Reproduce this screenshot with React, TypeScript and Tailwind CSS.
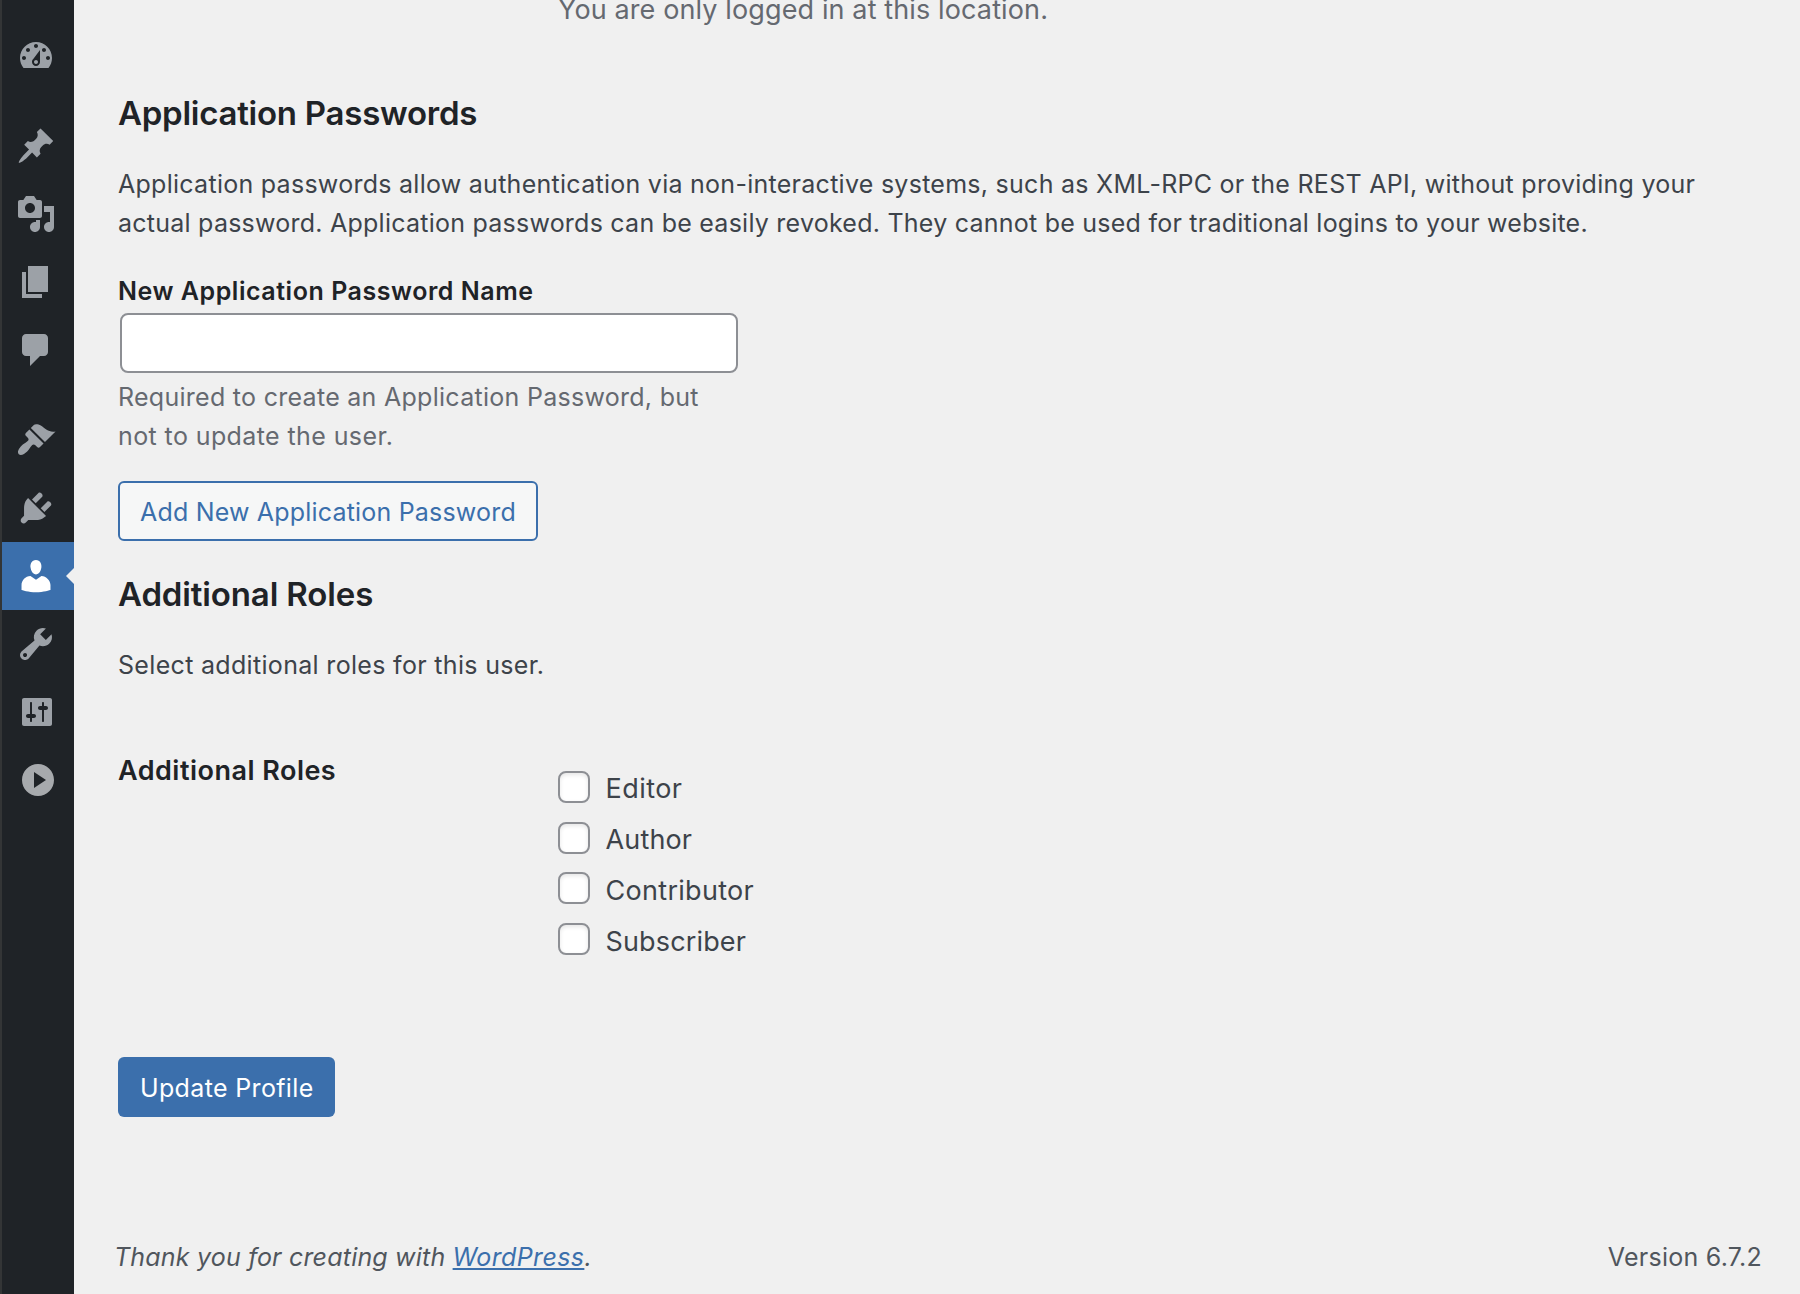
import React from 'react';

type MenuIcon = { name: string; d: string; current?: boolean };

const menuGroups: MenuIcon[][] = [
  [
    {
      name: 'Dashboard',
      d: 'M3.76 16h12.48c1.1-1.37 1.76-3.11 1.76-5 0-4.42-3.58-8-8-8s-8 3.58-8 8c0 1.89.66 3.63 1.76 5zM10 4c.55 0 1 .45 1 1s-.45 1-1 1-1-.45-1-1 .45-1 1-1zM6 6c.55 0 1 .45 1 1s-.45 1-1 1-1-.45-1-1 .45-1 1-1zm8 0c.55 0 1 .45 1 1s-.45 1-1 1-1-.45-1-1 .45-1 1-1zm-5.37 5.55L12 7v6c0 1.1-.9 2-2 2s-2-.9-2-2c0-.57.24-1.08.63-1.45zM4 10c.55 0 1 .45 1 1s-.45 1-1 1-1-.45-1-1 .45-1 1-1zm12 0c.55 0 1 .45 1 1s-.45 1-1 1-1-.45-1-1 .45-1 1-1zm-5 3c0-.55-.45-1-1-1s-1 .45-1 1 .45 1 1 1 1-.45 1-1z',
    },
  ],
  [
    {
      name: 'Posts',
      d: 'M10.44 3.02l1.82-1.82 6.36 6.35-1.83 1.82c-1.05-.68-2.48-.57-3.41.36l-.75.75c-.92.93-1.04 2.35-.35 3.41l-1.83 1.82-2.41-2.41-2.8 2.79c-.42.42-3.38 2.71-3.8 2.29s1.86-3.39 2.28-3.81l2.79-2.79L4.1 9.36l1.83-1.82c1.05.69 2.48.57 3.4-.36l.75-.75c.93-.92 1.05-2.35.36-3.41z',
    },
    {
      name: 'Media',
      d: 'M13 11V4c0-.55-.45-1-1-1h-1.67L9 1H5L3.67 3H2c-.55 0-1 .45-1 1v7c0 .55.45 1 1 1h10c.55 0 1-.45 1-1zM7 4.5c1.38 0 2.5 1.12 2.5 2.5S8.38 9.5 7 9.5 4.5 8.38 4.5 7 5.62 4.5 7 4.5zM14 6h5v10.5c0 1.38-1.12 2.5-2.5 2.5S14 17.88 14 16.5s1.12-2.5 2.5-2.5c.17 0 .34.02.5.05V9h-3V6zm-4 8.05V13h2v3.5c0 1.38-1.12 2.5-2.5 2.5S7 17.88 7 16.5 8.12 14 9.5 14c.17 0 .34.02.5.05z',
    },
    { name: 'Pages', d: 'M6 15V2h10v13H6zm-1 1h8v2H3V5h2v11z' },
    {
      name: 'Comments',
      d: 'M5 2h9q.82 0 1.41.59T16 4v7q0 .82-.59 1.41T14 13h-2l-5 5v-5H5q-.82 0-1.41-.59T3 11V4q0-.82.59-1.41T5 2z',
    },
  ],
  [
    {
      name: 'Appearance',
      d: 'M14.48 11.06L7.41 3.99l1.5-1.5c.5-.56 2.3-.47 3.51.32 1.21.8 1.43 1.28 2.91 2.1 1.18.64 2.45 1.26 4.45.85zm-.71.71L6.7 4.7 4.93 6.47c-.39.39-.39 1.02 0 1.41l1.06 1.06c.39.39.39 1.03 0 1.42-.6.6-1.43 1.11-2.21 1.69-.35.26-.7.53-1.01.84C1.43 14.23.4 16.08 1.4 17.07c.99 1 2.84-.03 4.18-1.36.31-.31.58-.66.85-1.02.57-.78 1.08-1.61 1.69-2.21.39-.39 1.02-.39 1.41 0l1.06 1.06c.39.39 1.02.39 1.41 0z',
    },
    {
      name: 'Plugins',
      d: 'M13.11 4.36L9.87 7.6 8 5.73l3.24-3.24c.35-.34 1.05-.2 1.56.32.52.51.66 1.21.31 1.55zm-8 1.77l.91-1.12 9.01 9.01-1.19.84c-.71.71-2.63 1.16-3.82 1.16H6.14L4.9 17.26c-.59.59-1.54.59-2.12 0-.59-.58-.59-1.53 0-2.12l1.24-1.24v-3.88c0-1.13.4-3.19 1.09-3.89zm7.26 3.97l3.24-3.24c.34-.35 1.04-.21 1.55.31.52.51.66 1.21.31 1.55l-3.24 3.25z',
    },
    {
      name: 'Users',
      current: true,
      d: 'M10 9.25c-2.27 0-2.73-3.44-2.73-3.44C7 4.02 7.82 2 9.97 2c2.16 0 2.98 2.02 2.71 3.81 0 0-.41 3.44-2.68 3.44zm0 2.57L12.72 10c2.39 0 4.52 2.33 4.52 4.53v2.49s-3.65 1.13-7.24 1.13c-3.65 0-7.24-1.13-7.24-1.13v-2.49c0-2.25 1.94-4.48 4.47-4.48z',
    },
    {
      name: 'Tools',
      d: 'M16.68 9.77c-1.34 1.34-3.3 1.67-4.95.99l-5.41 6.52c-.99.99-2.59.99-3.58 0s-.99-2.59 0-3.57l6.52-5.42c-.68-1.65-.35-3.61.99-4.95 1.28-1.28 3.12-1.62 4.72-1.06l-2.89 2.89 2.82 2.82 2.86-2.87c.53 1.58.18 3.39-1.08 4.65zM3.81 16.21c.4.39 1.04.39 1.43 0 .4-.4.4-1.04 0-1.43-.39-.4-1.03-.4-1.43 0-.39.39-.39 1.03 0 1.43z',
    },
    {
      name: 'Settings',
      d: 'M18 16V4c0-.55-.45-1-1-1H4c-.55 0-1 .45-1 1v12c0 .55.45 1 1 1h13c.55 0 1-.45 1-1zM8 11h1c.55 0 1 .45 1 1s-.45 1-1 1H8v1.5c0 .28-.22.5-.5.5s-.5-.22-.5-.5V13H6c-.55 0-1-.45-1-1s.45-1 1-1h1V5.5c0-.28.22-.5.5-.5s.5.22.5.5V11zm5-2h-1c-.55 0-1-.45-1-1s.45-1 1-1h1V5.5c0-.28.22-.5.5-.5s.5.22.5.5V7h1c.55 0 1 .45 1 1s-.45 1-1 1h-1v5.5c0 .28-.22.5-.5.5s-.5-.22-.5-.5V9z',
    },
  ],
];

const roles = [
  { name: 'Editor', box: 'mt-2', track: 'tracking-[0.45px]' },
  { name: 'Author', box: 'mt-2', track: 'tracking-[0.15px]' },
  { name: 'Contributor', box: 'mt-[7px]', track: 'tracking-[0.3px]' },
  { name: 'Subscriber', box: 'mt-[7px]', track: 'tracking-[0.15px]' },
];

function Sidebar() {
  return (
    <nav className="flex w-[74px] shrink-0 flex-col gap-[22px] border-l-2 border-[#333536] bg-[#1f2327] pt-[22px]">
      {menuGroups.map((group, i) => (
        <div key={i} className="flex flex-col">
          {group.map((item) => (
            <a
              key={item.name}
              aria-label={item.name}
              className={
                item.current
                  ? 'relative flex h-[68px] items-center pl-[14px] text-white bg-[#3b6fac]'
                  : 'relative flex h-[68px] items-center pl-[14px] text-[#9ca1a7]'
              }
            >
              <svg viewBox="0 0 20 20" className="size-10 fill-current">
                <path d={item.d} />
              </svg>
              {item.current && (
                <span className="absolute right-0 top-1/2 -translate-y-1/2 border-y-8 border-r-8 border-y-transparent border-r-[#f0f0f0]" />
              )}
            </a>
          ))}
          {i === menuGroups.length - 1 && (
            <button aria-label="Collapse menu" className="flex h-[68px] items-center pl-4 text-[#a7aaad]">
              <svg viewBox="0 0 20 20" className="size-10 fill-current">
                <path
                  fillRule="evenodd"
                  d="M10 2c4.42 0 8 3.58 8 8s-3.58 8-8 8-8-3.58-8-8 3.58-8 8-8zM8 6v8l6-4z"
                />
              </svg>
            </button>
          )}
        </div>
      ))}
    </nav>
  );
}

export default function App() {
  return (
    <div className="flex h-[1294px] w-[1800px] overflow-hidden bg-[#f0f0f0] font-['Inter',sans-serif] text-[25px] leading-[39px] text-[#3d434a]">
      <Sidebar />
      <main className="flex min-w-0 flex-1 flex-col">
        <div className="flex flex-col items-start pl-11">
          <p className="-mt-[10px] ml-[440px] whitespace-nowrap text-[27px] tracking-[0.12px] text-[#656970]">
            You are only logged in at this location.
          </p>

          <h2 className="mt-16 text-[33px] font-semibold leading-10 tracking-[-0.25px] text-[#1f2327]">
            Application Passwords
          </h2>
          <p className="mt-8 whitespace-nowrap tracking-[0.27px]">
            Application passwords allow authentication via non-interactive systems, such as XML-RPC or the REST API, without providing your
            <br />
            <span className="tracking-[0.24px]">
              actual password. Application passwords can be easily revoked. They cannot be used for traditional logins to your website.
            </span>
          </p>

          <label className="mt-7 font-semibold leading-10 tracking-[0.54px] text-[#1f2327]" htmlFor="app-name">
            New Application Password Name
          </label>
          <input
            id="app-name"
            className="ml-0.5 mt-0.5 h-[60px] w-[618px] rounded-lg border-2 border-[#8d8f94] bg-white px-4 outline-none"
          />
          <p className="mt-[5px] whitespace-nowrap tracking-[0.28px] text-[#656970]">
            Required to create an Application Password, but
            <br />
            <span className="tracking-[0.4px]">not to update the user.</span>
          </p>
          <button className="mt-[25px] h-[60px] w-[420px] whitespace-nowrap rounded-md border-2 border-[#3b6fac] bg-[#f6f7f7] px-5 text-left leading-[58px] tracking-[0.19px] text-[#3b6fac]">
            Add New Application Password
          </button>

          <h2 className="mt-[33px] text-[33px] font-semibold leading-10 tracking-[-0.13px] text-[#1f2327]">
            Additional Roles
          </h2>
          <p className="mt-8 tracking-[0.32px]">Select additional roles for this user.</p>

          <div className="mt-[66px] flex text-[27px]">
            <h3 className="w-[440px] font-semibold tracking-[0.48px] text-[#1f2327]">Additional Roles</h3>
            <div className="mt-3 flex flex-col">
              {roles.map((role) => (
                <label key={role.name} className="flex h-[51px] leading-[51px]">
                  <span
                    className={`${role.box} mr-[15.5px] size-8 rounded-lg border-2 border-[#8d8f94] bg-white shadow-[inset_0_2px_4px_rgba(0,0,0,0.1)]`}
                  />
                  <span className={role.track}>{role.name}</span>
                </label>
              ))}
            </div>
          </div>

          <button className="mt-[90px] h-[60px] w-[217px] whitespace-nowrap rounded-md bg-[#3b6fac] pl-[22px] text-left leading-[62px] tracking-[0.35px] text-white">
            Update Profile
          </button>
        </div>

        <footer className="mt-[121px] flex justify-between pl-10 pr-[38px] text-[#50565d]">
          <p className="italic tracking-[0.19px]">
            Thank you for creating with{' '}
            <a className="tracking-[0.37px] text-[#3b6fac] underline decoration-2 underline-offset-2">WordPress</a>.
          </p>
          <p className="tracking-[0.25px]">Version 6.7.2</p>
        </footer>
      </main>
    </div>
  );
}
